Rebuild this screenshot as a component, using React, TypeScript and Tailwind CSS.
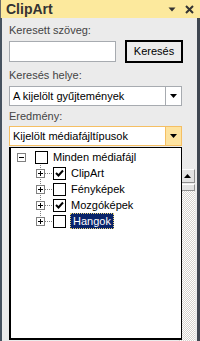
const font = "font-['Liberation_Sans',Arial,sans-serif]";

const DownArrow = () => (
  <svg width="7" height="4" viewBox="0 0 7 4">
    <polygon points="0,0 7,0 3.5,4" fill="#000" />
  </svg>
);

const PlusMinus = ({ plus }: { plus?: boolean }) => (
  <div className="w-[9px] h-[9px] border border-[#808080] bg-white flex items-center justify-center shrink-0">
    <svg width="7" height="7" viewBox="0 0 7 7">
      <line x1="1" y1="3.5" x2="6" y2="3.5" stroke="#000" strokeWidth="1" />
      {plus && <line x1="3.5" y1="1" x2="3.5" y2="6" stroke="#000" strokeWidth="1" />}
    </svg>
  </div>
);

const Check = ({ checked }: { checked?: boolean }) => (
  <div className="w-[13px] h-[13px] border border-black bg-white shrink-0 flex items-center justify-center">
    {checked && (
      <svg width="11" height="11" viewBox="0 0 11 11">
        <polyline points="2,5 4.5,7.5 9,2.5" fill="none" stroke="#000" strokeWidth="2" />
      </svg>
    )}
  </div>
);

const children = [
  { label: 'ClipArt', checked: true },
  { label: 'Fényképek', checked: false },
  { label: 'Mozgóképek', checked: true },
  { label: 'Hangok', checked: false, selected: true },
];

export default function App() {
  return (
    <div className={`w-[200px] h-[341px] relative overflow-hidden flex flex-col text-[11px] leading-[13px] ${font}`}>
      {/* title */}
      <div className="h-[18px] bg-[#fce99d] flex items-center pl-[5px] pr-[6px] border-l border-[#6b6b6b]">
        <span className="font-bold text-[14px] text-[#333]">ClipArt</span>
        <div className="ml-auto flex items-center gap-[9px]">
          <svg width="8" height="5" viewBox="0 0 8 5">
            <polygon points="0.5,0.5 7.5,0.5 4,4.5" fill="#333" />
          </svg>
          <svg width="9" height="9" viewBox="0 0 9 9">
            <path d="M1 1 L8 8 M8 1 L1 8" stroke="#333" strokeWidth="2" />
          </svg>
        </div>
      </div>

      <div className="flex flex-1">
        <div className="w-[2px] bg-[#46525f]" />
        <div className="flex-1 bg-[#ebebeb] pl-[7px] pr-[2px] flex flex-col">
          <div className="mt-[6px] text-[#444]">Keresett szöveg:</div>
          <div className="mt-[3px] flex items-center w-[174px]">
            <div className="w-[107px] h-[21px] border border-[#a7abb0] bg-white" />
            <button className="ml-auto w-[58px] h-[23px] border-2 border-black bg-[#ececec] text-black text-[11px]">
              Keresés
            </button>
          </div>
          <div className="mt-[6px] text-[#444]">Keresés helye:</div>
          <div className="mt-[4px] w-[173px] h-[20px] border border-[#a7abb0] bg-white flex">
            <div className="flex-1 pl-[3px] flex items-center text-black">A kijelölt gyűjtemények</div>
            <div className="w-[16px] border-l border-[#a7abb0] bg-white flex items-center justify-center">
              <DownArrow />
            </div>
          </div>
          <div className="mt-[4px] text-[#444]">Eredmény:</div>
          <div className="mt-[3px] w-[173px] h-[20px] border border-[#f5bf63] bg-white flex">
            <div className="flex-1 pl-[3px] flex items-center text-black">Kijelölt médiafájltípusok</div>
            <div className="w-[16px] border-l border-[#f5bf63] bg-[#fde3a0] flex items-center justify-center">
              <DownArrow />
            </div>
          </div>
          {/* scrollbar behind popup */}
          <div className="mt-[23px] flex-1 self-end w-[16px] flex flex-col">
            <div className="h-[14px] bg-[#e3e3e3] border border-[#8f8f8f] border-t-[#ffffff] border-l-[#ffffff] flex items-center justify-center">
              <svg width="7" height="4" viewBox="0 0 7 4">
                <polygon points="0,4 7,4 3.5,0" fill="#000" />
              </svg>
            </div>
            <div className="mt-[1px] h-[7px] bg-[#e3e3e3] border border-[#8f8f8f] border-t-[#ffffff] border-l-[#ffffff]" />
            <div className="flex-1 bg-[repeating-conic-gradient(#d6d3ce_0_25%,#ffffff_0_50%)] [background-size:2px_2px]" />
          </div>
        </div>
        <div className="w-[3px] bg-[#3f4650]" />
      </div>

      {/* open dropdown list */}
      <div className="absolute left-[9px] top-[147px] w-[173px] h-[193px] bg-white border-2 border-r border-t border-black pt-[1px] text-black">
        <div className="h-[16px] flex items-center">
          <div className="ml-[6px]">
            <PlusMinus />
          </div>
          <div className="ml-[9px]">
            <Check />
          </div>
          <span className="ml-[5px]">Minden médiafájl</span>
        </div>
        <div className="relative">
          <svg className="absolute left-0 top-0" width="40" height="64">
            <line x1="29.5" y1="0" x2="29.5" y2="56" stroke="#808080" strokeDasharray="1 1" />
          </svg>
          {children.map((c) => (
            <div key={c.label} className="relative h-[16px] flex items-center">
              <div className="ml-[25px]">
                <PlusMinus plus />
              </div>
              <svg width="8" height="1" className="shrink-0">
                <line x1="0" y1="0.5" x2="8" y2="0.5" stroke="#808080" strokeDasharray="1 1" />
              </svg>
              <Check checked={c.checked} />
              {c.selected ? (
                <span className="ml-[4px] h-[16px] px-[2px] flex items-center bg-[#0a246a] text-white border border-dotted border-[#e8d27a]">
                  {c.label}
                </span>
              ) : (
                <span className="ml-[5px]">{c.label}</span>
              )}
            </div>
          ))}
        </div>
      </div>
    </div>
  );
}
